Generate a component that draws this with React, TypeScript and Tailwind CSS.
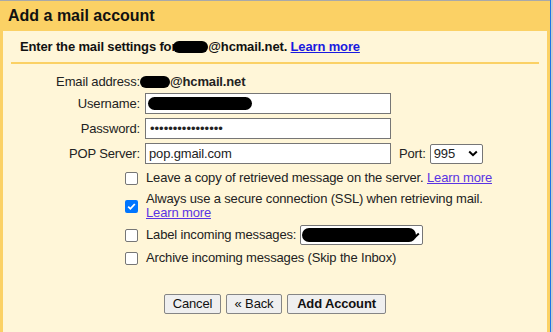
import { ReactNode } from "react";

const Blob = ({ w, h, className = "" }: { w: string; h: string; className?: string }) => (
  <span className={`inline-block ${w} ${h} rounded-full bg-black align-middle ${className}`} />
);

const Chevron = () => (
  <svg width="10" height="7" viewBox="0 0 10 7" className="shrink-0">
    <path d="M1.2 1.5 L5 5.2 L8.8 1.5" fill="none" stroke="#000" strokeWidth="2" />
  </svg>
);

const Box = ({ checked = false }: { checked?: boolean }) =>
  checked ? (
    <span className="w-[13px] h-[13px] rounded-[2px] bg-[#0075ff] flex items-center justify-center shrink-0">
      <svg width="11" height="11" viewBox="0 0 11 11">
        <path d="M2.2 5.6 L4.4 7.8 L8.8 3" fill="none" stroke="#fff" strokeWidth="1.8" />
      </svg>
    </span>
  ) : (
    <span className="w-[13px] h-[13px] rounded-[2px] bg-white border border-[#767676] shrink-0" />
  );

function CheckRow({ checked, children, className = "" }: { checked?: boolean; children: ReactNode; className?: string }) {
  return (
    <div className={`flex items-center gap-[8px] ${className}`}>
      <Box checked={checked} />
      <div className="leading-[14px]">{children}</div>
    </div>
  );
}

function Field({ label, children }: { label: string; children: ReactNode }) {
  return (
    <>
      <div className="text-right leading-[21px]">{label}</div>
      <div className="flex items-center">{children}</div>
    </>
  );
}

const Btn = ({ w, bold, children }: { w: string; bold?: boolean; children: ReactNode }) => (
  <button className={`${w} h-[20px] bg-[#efefef] border border-[#858585] rounded-[2px] text-[#111] leading-[18px] ${bold ? "font-bold" : ""}`}>
    {children}
  </button>
);

export default function App() {
  return (
    <div className="w-[553px] h-[332px] flex bg-[#cdcdcd] overflow-hidden text-[#222] text-[13px] tracking-[-0.15px] font-['Liberation_Sans',Arial,sans-serif]">
      <div className="w-[550px] flex flex-col bg-[#fbd165] border-t border-[#a9a9a9]">
        <div className="h-[30px] shrink-0 pl-[8px] flex items-center text-[16px] font-bold tracking-normal text-[#111]">
          Add a mail account
        </div>
        <div className="flex-1 mx-[3px] bg-[#fff6d8] px-[8px]">
          <div className="h-[33px] border-b-2 border-[#fbd165] pl-[9px] flex items-center font-bold text-[#111]">
            Enter the mail settings for
            <Blob w="w-[35px]" h="h-[12px]" className="-ml-[3px]" />
            @hcmail.net.&nbsp;
            <a className="text-[#1a1adf] underline">Learn more</a>
          </div>

          <div className="mt-[10px] grid grid-cols-[129px_1fr] gap-x-[5px] gap-y-[4px]">
            <div className="text-right leading-[15px]">Email address:</div>
            <div className="leading-[15px] -ml-[5px] font-bold flex items-center">
              <Blob w="w-[30px]" h="h-[12px]" />
              @hcmail.net
            </div>
            <Field label="Username:">
              <div className="w-[246px] h-[21px] bg-white border border-[#767676] flex items-center pl-[2px]">
                <Blob w="w-[104px]" h="h-[13px]" />
              </div>
            </Field>
            <Field label="Password:">
              <div className="w-[246px] h-[21px] bg-white border border-[#767676] flex items-center pl-[4px] tracking-normal leading-none">
                ••••••••••••••••
              </div>
            </Field>
            <Field label="POP Server:">
              <div className="w-[246px] h-[21px] bg-white border border-[#767676] flex items-center pl-[3px]">
                pop.gmail.com
              </div>
              <span className="ml-[8px]">Port:</span>
              <div className="ml-[4px] w-[53px] h-[20px] bg-white border border-[#767676] rounded-[2px] flex items-center justify-between pl-[3px] pr-[4px]">
                995
                <Chevron />
              </div>
            </Field>
          </div>

          <div className="ml-[114px] mt-[7px] flex flex-col">
            <CheckRow>
              Leave a copy of retrieved message on the server.{" "}
              <a className="text-[#5a34e3] underline">Learn more</a>
            </CheckRow>
            <CheckRow checked className="mt-[7px]">
              Always use a secure connection (SSL) when retrieving mail.
              <br />
              <a className="text-[#5a34e3] underline">Learn more</a>
            </CheckRow>
            <CheckRow className="mt-[5px]">
              <div className="flex items-center">
                Label incoming messages:
                <div className="ml-[4px] w-[123px] h-[20px] bg-white border border-[#767676] rounded-[2px] flex items-center pl-[1px] pr-[2px]">
                  <Blob w="w-[116px]" h="h-[14px]" />
                  <span className="-ml-[6px]">
                    <Chevron />
                  </span>
                </div>
              </div>
            </CheckRow>
            <CheckRow className="mt-[6px]">Archive incoming messages (Skip the Inbox)</CheckRow>
          </div>

          <div className="mt-[29px] flex justify-center gap-[5px]">
            <Btn w="w-[57px]">Cancel</Btn>
            <Btn w="w-[56px]">« Back</Btn>
            <Btn w="w-[99px]" bold>
              Add Account
            </Btn>
          </div>
        </div>
      </div>
      <div className="w-px bg-[#1a73e8]" />
    </div>
  );
}
